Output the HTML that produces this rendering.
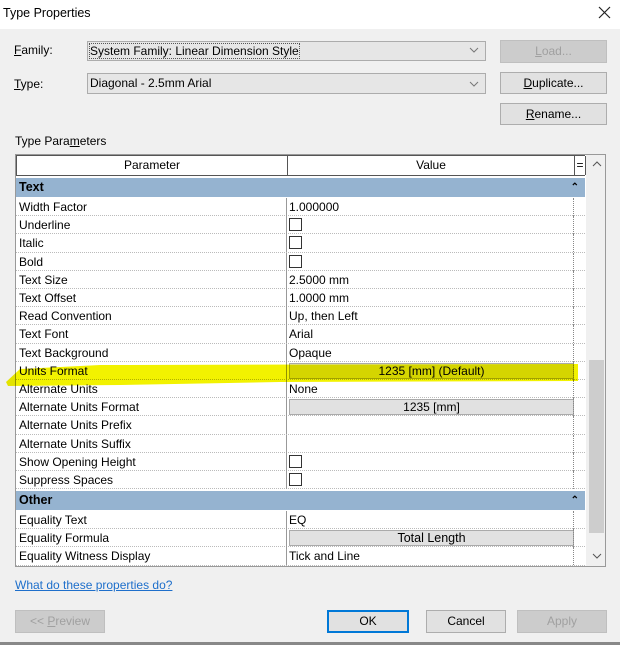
<!DOCTYPE html>
<html><head><style>
*{box-sizing:border-box;margin:0;padding:0}
body{width:620px;height:645px;background:#f0f0f0;font-family:"Liberation Sans",sans-serif;font-size:12px;color:#000;position:relative;overflow:hidden}
.a{position:absolute}
.btn{position:absolute;background:#e1e1e1;border:1px solid #adadad;text-align:center;font-size:12px;line-height:20px}
.dis{color:#a0a0a0;background:#cccccc;border-color:#bfbfbf}
.combo{position:absolute;background:#e6e6e6;border:1px solid #acacac;padding-left:2px;line-height:18px}
.chev{position:absolute;right:6px;top:5px}
.row{position:absolute;left:16px;width:569px;height:18.2px;background:#fff;border-bottom:1px dotted #bbb;line-height:18px}
.row .p{position:absolute;left:3px}
.row .v{position:absolute;left:270px;top:0;width:287px;height:18px;border-left:1px solid #999;padding-left:2px}
.row .e{position:absolute;left:557px;top:0;width:12px;height:18px;border-left:1px dotted #888}
.cb{display:inline-block;width:13px;height:13px;border:1px solid #333;background:#fff;margin-top:2px}
.vb{position:absolute;left:2px;top:1px;width:285px;height:16px;background:#e1e1e1;border:1px solid #aaa;text-align:center;line-height:14px}
.grp{position:absolute;left:16px;width:569px;background:#95b3d0;font-weight:bold;line-height:19px;padding-left:3px;font-size:12.5px}
.grp span{position:absolute;right:6px;font-size:10px}
</style></head><body>
<div class="a" style="left:0;top:0;width:620px;height:29px;background:#fff"></div>
<div class="a" style="left:3px;top:6px;font-size:12.5px">Type Properties</div>
<svg class="a" style="left:598px;top:6px" width="13" height="13"><path d="M1 1L12 12M12 1L1 12" stroke="#222" stroke-width="1.2"/></svg>

<div class="a" style="left:14px;top:43px"><u>F</u>amily:</div>
<div class="combo" style="left:87px;top:41px;width:399px;height:20px"><span style="outline:1px dotted #555">System Family: Linear Dimension Style</span><svg class="chev" width="10" height="6"><path d="M1 1L5 5L9 1" stroke="#777" fill="none"/></svg></div>
<div class="a" style="left:14px;top:77px"><u>T</u>ype:</div>
<div class="combo" style="left:87px;top:73px;width:399px;height:21px;line-height:19px">Diagonal - 2.5mm Arial<svg class="chev" width="10" height="6" style="top:7px"><path d="M1 1L5 5L9 1" stroke="#777" fill="none"/></svg></div>
<div class="btn dis" style="left:500px;top:40px;width:107px;height:23px"><u>L</u>oad...</div>
<div class="btn" style="left:500px;top:72px;width:107px;height:22px"><u>D</u>uplicate...</div>
<div class="btn" style="left:500px;top:103px;width:107px;height:22px"><u>R</u>ename...</div>
<div class="a" style="left:15px;top:134px">Type Para<u>m</u>eters</div>

<div class="a" style="left:15px;top:154px;width:591px;height:413px;background:#fff;border:1px solid #999"></div>
<div class="a" style="left:16px;top:155px;width:569px;height:21px;background:#fff;border-bottom:1px solid #555;border-top:1px solid #555;border-left:1px solid #555">
<div class="a" style="left:0;width:270px;text-align:center;line-height:19px">Parameter</div>
<div class="a" style="left:270px;width:287px;height:19px;border-left:1px solid #555;text-align:center;line-height:19px">Value</div>
<div class="a" style="left:557px;width:12px;height:19px;border-left:1px solid #555;border-right:1px solid #555;text-align:center;line-height:19px">=</div>
</div>
<div class="a" style="left:586px;top:155px;width:19px;height:411px;background:#f0f0f0"></div>
<div class="a" style="left:589px;top:360px;width:15px;height:173px;background:#cdcdcd"></div>
<svg class="a" style="left:592px;top:161px" width="10" height="6"><path d="M1 5L5 1L9 5" stroke="#555" fill="none"/></svg>
<svg class="a" style="left:592px;top:553px" width="10" height="6"><path d="M1 1L5 5L9 1" stroke="#555" fill="none"/></svg>

<div class="grp" style="top:178px;height:19px">Text<span>⌃</span></div>
<div class="row" style="top:198px"><span class="p">Width Factor</span><div class="v">1.000000</div><div class="e"></div></div>
<div class="row" style="top:216.2px"><span class="p">Underline</span><div class="v"><span class="cb"></span></div><div class="e"></div></div>
<div class="row" style="top:234.4px"><span class="p">Italic</span><div class="v"><span class="cb"></span></div><div class="e"></div></div>
<div class="row" style="top:252.6px"><span class="p">Bold</span><div class="v"><span class="cb"></span></div><div class="e"></div></div>
<div class="row" style="top:270.8px"><span class="p">Text Size</span><div class="v">2.5000 mm</div><div class="e"></div></div>
<div class="row" style="top:289px"><span class="p">Text Offset</span><div class="v">1.0000 mm</div><div class="e"></div></div>
<div class="row" style="top:307.2px"><span class="p">Read Convention</span><div class="v">Up, then Left</div><div class="e"></div></div>
<div class="row" style="top:325.4px"><span class="p">Text Font</span><div class="v">Arial</div><div class="e"></div></div>
<div class="row" style="top:343.6px"><span class="p">Text Background</span><div class="v">Opaque</div><div class="e"></div></div>
<div class="row" style="top:361.8px"><span class="p">Units Format</span><div class="v"><div class="vb">1235 [mm] (Default)</div></div><div class="e"></div></div>
<div class="row" style="top:380px"><span class="p">Alternate Units</span><div class="v">None</div><div class="e"></div></div>
<div class="row" style="top:398.2px"><span class="p">Alternate Units Format</span><div class="v"><div class="vb">1235 [mm]</div></div><div class="e"></div></div>
<div class="row" style="top:416.4px"><span class="p">Alternate Units Prefix</span><div class="v"></div><div class="e"></div></div>
<div class="row" style="top:434.6px"><span class="p">Alternate Units Suffix</span><div class="v"></div><div class="e"></div></div>
<div class="row" style="top:452.8px"><span class="p">Show Opening Height</span><div class="v"><span class="cb"></span></div><div class="e"></div></div>
<div class="row" style="top:471px"><span class="p">Suppress Spaces</span><div class="v"><span class="cb"></span></div><div class="e"></div></div>
<div class="grp" style="top:491px;height:19px">Other<span>⌃</span></div>
<div class="row" style="top:511px"><span class="p">Equality Text</span><div class="v">EQ</div><div class="e"></div></div>
<div class="row" style="top:529.2px"><span class="p">Equality Formula</span><div class="v"><div class="vb" style="font-size:12.5px">Total Length</div></div><div class="e"></div></div>
<div class="row" style="top:547.4px"><span class="p">Equality Witness Display</span><div class="v">Tick and Line</div><div class="e"></div></div>

<svg class="a" style="left:0;top:355px;mix-blend-mode:multiply" width="585" height="35"><path d="M6 27 L20 14 L100 10 L578 9 L578 26 L280 27 L120 30 L8 31 Z" fill="#f2f200"/></svg>

<div class="a" style="left:15px;top:578px;color:#1e6fcb;text-decoration:underline">What do these properties do?</div>
<div class="btn dis" style="left:15px;top:610px;width:90px;height:23px">&lt;&lt; <u>P</u>review</div>
<div class="btn" style="left:327px;top:610px;width:82px;height:23px;border:2px solid #0078d7;line-height:19px">OK</div>
<div class="btn" style="left:426px;top:610px;width:80px;height:23px">Cancel</div>
<div class="btn dis" style="left:517px;top:610px;width:90px;height:23px">Apply</div>
<div class="a" style="left:0;top:642px;width:620px;height:3px;background:#888"></div>
</body></html>
